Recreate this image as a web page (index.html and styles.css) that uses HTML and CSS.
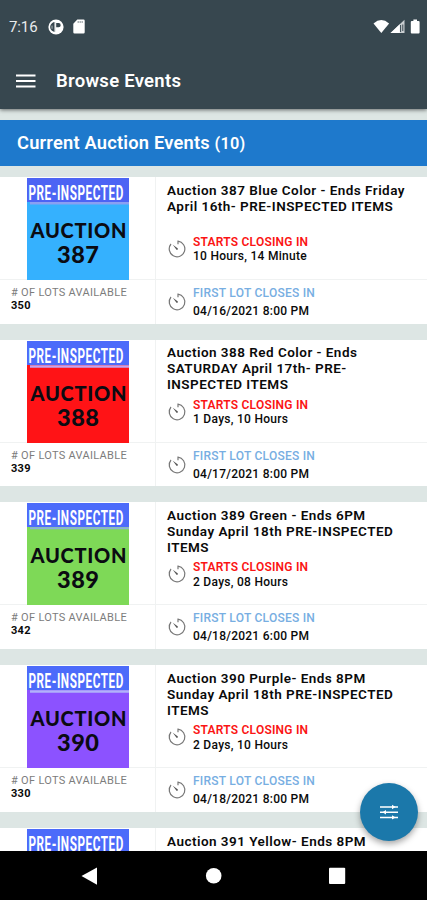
FILE: index.html
```html
<!DOCTYPE html>
<html lang="en">
<head>
<meta charset="utf-8">
<title>Browse Events</title>
<link rel="stylesheet" href="styles.css">
</head>
<body>
<svg class="defs" width="0" height="0" aria-hidden="true">
  <symbol id="timer" viewBox="0 0 20 20">
    <path d="M4 5A7.8 7.8 0 1 0 11 2.2V5.2" fill="none" stroke="#777" stroke-width="1.2"/>
    <path d="M5.8 5.8L10.6 9.2A.9.9 0 0 1 9.3 10.6Z" fill="#555"/>
  </symbol>
</svg>
<div class="screen">
  <header class="top">
    <div class="status">
      <span class="time">7:16</span>
      <svg class="s-app" width="16" height="16" viewBox="0 0 16 16"><circle cx="8" cy="8" r="7.6" fill="#fff"/><path d="M8 3.2A4.9 4.9 0 1 0 8 12.8ZM8.2 4.1H10.6A2.1 2.1 0 0 1 10.6 8.3H8.2Z" fill="#37474f"/><path d="M7.2 3V13" stroke="#fff" stroke-width="1.4"/><path d="M4 6.6V9.8" stroke="#fff" stroke-width=".6"/></svg>
      <svg class="s-card" width="12" height="15" viewBox="0 0 12 15"><path d="M4.3.5H10.5A1.2 1.2 0 0 1 11.7 1.7V13.2A1.2 1.2 0 0 1 10.5 14.4H1.5A1.2 1.2 0 0 1 .3 13.2V4.7Z" fill="#fff"/><path d="M4.6 3H10" stroke="#37474f" stroke-width="1.2" stroke-dasharray="1.2 .8"/></svg>
      <svg class="s-right" width="50" height="16" viewBox="0 0 50 16"><path d="M.5 4.4Q8.3-2.3 16.1 4.4L8.3 14Z" fill="#fff"/><path d="M17.5 14L31.5 .8V14Z" fill="#c9ced1"/><path d="M17.5 14L26.8 5.2V14Z" fill="#fff"/><path d="M27.6 6V13M29.8 5.5V12" stroke="#37474f" stroke-width="1"/><path d="M40.4.4H44V2H45.6A1 1 0 0 1 46.6 3V13.6A1 1 0 0 1 45.6 14.6H38.8A1 1 0 0 1 37.8 13.6V3A1 1 0 0 1 38.8 2H40.4Z" fill="#fff"/></svg>
    </div>
    <div class="appbar">
      <svg width="20" height="14" viewBox="0 0 20 14"><path d="M0 1.5H19.5M0 7H19.5M0 12.5H19.5" stroke="#fff" stroke-width="1.8"/></svg>
      <h1>Browse Events</h1>
    </div>
  </header>
  <h2 class="banner">Current Auction Events <span>(10)</span></h2>
  <main class="list">
    <article class="card">
      <div class="pic"><svg width="102" height="102" viewBox="0 0 102 102"><rect width="102" height="102" fill="#35b1fe"/><rect width="102" height="24" fill="#4c64f4"/><path d="M3 25.2H102" stroke="#8aa0f2" stroke-width="2.4"/><text class="pre" x="1.4" y="22" textLength="95.5" lengthAdjust="spacingAndGlyphs">PRE-INSPECTED</text><text class="word" x="3.5" y="60.3" textLength="96" lengthAdjust="spacing">AUCTION</text><text class="num" x="30" y="84.7" textLength="42" lengthAdjust="spacing">387</text></svg></div>
      <div class="info"><h3>Auction 387 Blue Color - Ends Friday<br>April 16th- PRE-INSPECTED ITEMS</h3><div class="when"><svg class="clock"><use href="#timer"/></svg><p><b class="red">STARTS CLOSING IN</b><span>10 Hours, 14 Minute</span></p></div></div>
      <div class="lots"><span>#&nbsp;OF LOTS AVAILABLE</span><b>350</b></div>
      <div class="first"><svg class="clock"><use href="#timer"/></svg><p><b class="blue">FIRST LOT CLOSES IN</b><span>04/16/2021 8:00 PM</span></p></div>
    </article>
    <article class="card">
      <div class="pic"><svg width="102" height="102" viewBox="0 0 102 102"><rect width="102" height="102" fill="#ff1316"/><rect width="102" height="24" fill="#4c6bfa"/><path d="M3 25.5H102" stroke="#c5a5ee" stroke-width="2.4"/><text class="pre" x="1.4" y="22" textLength="95.5" lengthAdjust="spacingAndGlyphs">PRE-INSPECTED</text><text class="word" x="3.5" y="60.3" textLength="96" lengthAdjust="spacing">AUCTION</text><text class="num" x="30" y="84.7" textLength="42" lengthAdjust="spacing">388</text></svg></div>
      <div class="info"><h3>Auction 388 Red Color - Ends<br>SATURDAY April 17th- PRE-<br>INSPECTED ITEMS</h3><div class="when"><svg class="clock"><use href="#timer"/></svg><p><b class="red">STARTS CLOSING IN</b><span>1 Days, 10 Hours</span></p></div></div>
      <div class="lots"><span>#&nbsp;OF LOTS AVAILABLE</span><b>339</b></div>
      <div class="first"><svg class="clock"><use href="#timer"/></svg><p><b class="blue">FIRST LOT CLOSES IN</b><span>04/17/2021 8:00 PM</span></p></div>
    </article>
    <article class="card">
      <div class="pic"><svg width="102" height="102" viewBox="0 0 102 102"><rect width="102" height="102" fill="#7ed957"/><rect width="102" height="24" fill="#4c6bfa"/><path d="M3 25.2H102" stroke="#8fb0d8" stroke-width="2"/><text class="pre" x="1.4" y="22" textLength="95.5" lengthAdjust="spacingAndGlyphs">PRE-INSPECTED</text><text class="word" x="3.5" y="60.3" textLength="96" lengthAdjust="spacing">AUCTION</text><text class="num" x="30" y="84.7" textLength="42" lengthAdjust="spacing">389</text></svg></div>
      <div class="info"><h3>Auction 389 Green - Ends 6PM<br>Sunday April 18th PRE-INSPECTED<br>ITEMS</h3><div class="when"><svg class="clock"><use href="#timer"/></svg><p><b class="red">STARTS CLOSING IN</b><span>2 Days, 08 Hours</span></p></div></div>
      <div class="lots"><span>#&nbsp;OF LOTS AVAILABLE</span><b>342</b></div>
      <div class="first"><svg class="clock"><use href="#timer"/></svg><p><b class="blue">FIRST LOT CLOSES IN</b><span>04/18/2021 6:00 PM</span></p></div>
    </article>
    <article class="card">
      <div class="pic"><svg width="102" height="102" viewBox="0 0 102 102"><rect width="102" height="102" fill="#8c52ff"/><rect width="102" height="24" fill="#4c6bfa"/><path d="M3 25.5H102" stroke="#b1b2fa" stroke-width="2.4"/><text class="pre" x="1.4" y="22" textLength="95.5" lengthAdjust="spacingAndGlyphs">PRE-INSPECTED</text><text class="word" x="3.5" y="60.3" textLength="96" lengthAdjust="spacing">AUCTION</text><text class="num" x="30" y="84.7" textLength="42" lengthAdjust="spacing">390</text></svg></div>
      <div class="info"><h3>Auction 390 Purple- Ends 8PM<br>Sunday April 18th PRE-INSPECTED<br>ITEMS</h3><div class="when"><svg class="clock"><use href="#timer"/></svg><p><b class="red">STARTS CLOSING IN</b><span>2 Days, 10 Hours</span></p></div></div>
      <div class="lots"><span>#&nbsp;OF LOTS AVAILABLE</span><b>330</b></div>
      <div class="first"><svg class="clock"><use href="#timer"/></svg><p><b class="blue">FIRST LOT CLOSES IN</b><span>04/18/2021 8:00 PM</span></p></div>
    </article>
    <article class="card">
      <div class="pic"><svg width="102" height="102" viewBox="0 0 102 102"><rect width="102" height="102" fill="#4c6bfa"/><text class="pre" x="1.4" y="22" textLength="95.5" lengthAdjust="spacingAndGlyphs">PRE-INSPECTED</text></svg></div>
      <div class="info"><h3>Auction 391 Yellow- Ends 8PM</h3></div>
    </article>
  </main>
  <button class="fab" aria-label="Filter"><svg width="18" height="16" viewBox="0 0 18 16"><path d="M0 3H18M0 8.2H18M0 13.4H18" stroke="#fff" stroke-width="1.5"/><path d="M12 .8L15.6 3L12 5.2ZM6 6L2.4 8.2L6 10.4ZM12 11.2L15.6 13.4L12 15.6Z" fill="#fff"/></svg></button>
  <nav class="nav">
    <svg width="427" height="49" viewBox="0 0 427 49"><path d="M81.5 25L97 16.5V33.8Z" fill="#fff"/><circle cx="213.7" cy="24.8" r="7.8" fill="#fff"/><rect x="329" y="16.8" width="16.2" height="16.2" rx="1" fill="#fff"/></svg>
  </nav>
</div>
</body>
</html>
```
FILE: styles.css
```css
* { box-sizing: border-box; margin: 0; }
body { font-family: Roboto, "Liberation Sans", sans-serif; color: #0a0a0a; }
.defs { display: block; }
.screen { position: relative; width: 427px; height: 900px; overflow: hidden; background: #dde6e4; display: flex; flex-direction: column; }
.top { flex: none; height: 109px; background: #37474f; color: #fff; box-shadow: 0 1px 4px rgba(0, 0, 0, .55); }
.status { height: 53px; display: flex; align-items: center; padding-left: 9px; }
.time { font-size: 15px; width: 39px; letter-spacing: -.1px; color: #e8ebed; }
.s-card { margin-left: 9px; }
.s-right { margin-left: auto; margin-right: 4px; }
.appbar { height: 55px; display: flex; align-items: center; padding-left: 16px; gap: 20px; }
.appbar h1 { font-size: 18.5px; font-weight: 600; letter-spacing: .27px; }
.banner { flex: none; margin-top: 11px; height: 46px; line-height: 46px; padding-left: 17px; background: #1e79cc; color: #fff; font-size: 18.3px; font-weight: 600; letter-spacing: .2px; white-space: nowrap; }
.banner span { font-size: 16.3px; }
.list { flex: 1; min-height: 0; overflow: hidden; padding-top: 11px; display: flex; flex-direction: column; gap: 16.2px; }
.card { flex: none; height: 146.5px; background: #fff; display: grid; grid-template-columns: 156px 1fr; grid-template-rows: 103px 43.5px; }
.pic { padding: 1px 0 0 27px; border-right: 1px solid #f0f2f2; border-bottom: 1px solid #f0f2f2; }
.pic svg { display: block; overflow: visible; }
.pre { font: 20.5px Roboto, sans-serif; font-weight: 700; letter-spacing: 1px; fill: #fff; }
.word, .num { font-family: Lato, sans-serif; font-weight: 900; fill: #0b0b12; }
.word { font-size: 20px; }
.num { font-size: 23.5px; }
.info { padding: 4.8px 0 0 11px; border-bottom: 1px solid #f0f2f2; display: flex; flex-direction: column; }
.info h3 { height: 53.2px; font-size: 13.5px; line-height: 16px; font-weight: 600; letter-spacing: .47px; white-space: nowrap; }
.when, .first { display: flex; gap: 6px; }
.clock { flex: none; width: 20px; height: 20px; }
.when .clock { margin-top: 4px; }
.when p b, .when p span { display: block; font-size: 12px; line-height: 14.5px; white-space: nowrap; font-weight: 500; letter-spacing: .28px; }
.lots { border-right: 1px solid #f0f2f2; padding: 6px 0 0 11px; display: flex; flex-direction: column; font-size: 11px; line-height: 13px; letter-spacing: .3px; white-space: nowrap; }
.lots span { color: #7c7c7c; }
.lots b { font-weight: 700; }
.first { padding: 4px 0 0 11px; }
.first .clock { margin-top: 8px; }
.first p b, .first p span { display: block; font-size: 12px; line-height: 18px; white-space: nowrap; font-weight: 500; letter-spacing: .25px; }
.when p .red { color: #fb1414; font-weight: 600; letter-spacing: .22px; }
.first p .blue { color: #77aee2; }
.fab { position: absolute; left: 360px; top: 783px; width: 58px; height: 58px; border: 0; border-radius: 50%; background: #1b78aa; display: flex; align-items: center; justify-content: center; box-shadow: 0 3px 6px rgba(0, 0, 0, .35); padding: 0; }
.nav { flex: none; height: 49px; background: #000; }
.nav svg { display: block; }
```
